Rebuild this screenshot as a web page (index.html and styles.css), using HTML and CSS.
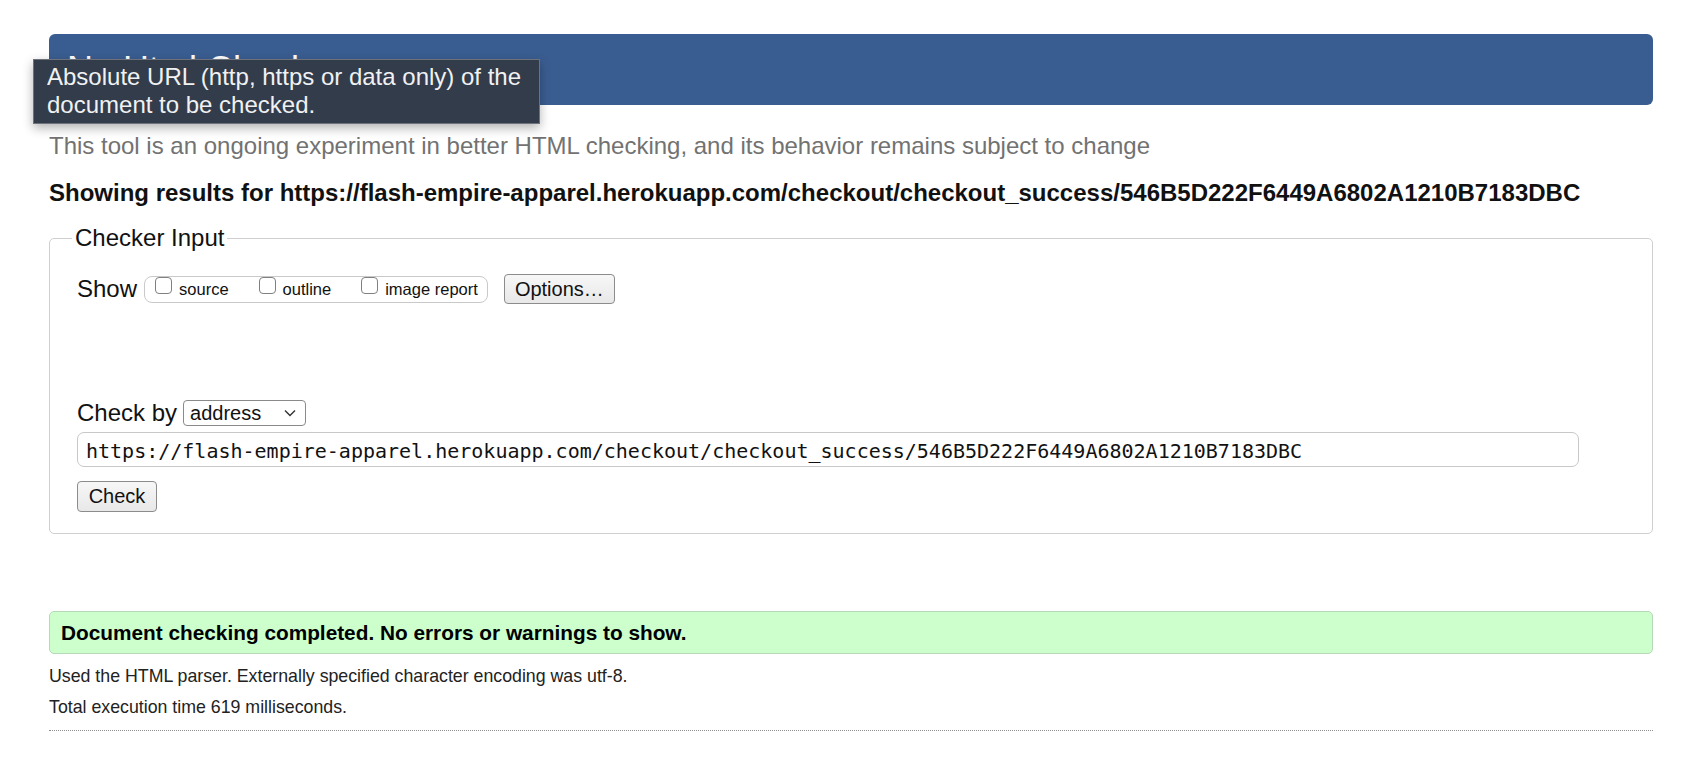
FILE: index.html
```html
<!DOCTYPE html>
<html lang="en">
<head>
<meta charset="utf-8">
<title>Showing results for https://flash-empire-apparel.herokuapp.com/checkout/checkout_success/546B5D222F6449A6802A1210B7183DBC - Nu Html Checker</title>
<link rel="stylesheet" href="styles.css">
</head>
<body>
<h1 class="site-title">Nu Html Checker</h1>
<p class="intro">This tool is an ongoing experiment in better HTML checking, and its behavior remains subject to change</p>
<p class="showing">Showing results for https://flash-empire-apparel.herokuapp.com/checkout/checkout_success/546B5D222F6449A6802A1210B7183DBC</p>
<form class="checker-form">
  <fieldset class="checker">
    <legend class="checker-legend">Checker Input</legend>
    <div class="show-row">
      <span class="row-label show-label">Show</span>
      <span class="show-options">
        <label class="opt"><input type="checkbox" class="cb">source</label>
        <label class="opt"><input type="checkbox" class="cb">outline</label>
        <label class="opt"><input type="checkbox" class="cb">image report</label>
      </span>
      <button type="button" class="btn options-btn">Options…</button>
    </div>
    <div class="checkby-row">
      <span class="row-label checkby-label">Check by</span>
      <select class="select"><option>address</option><option>file upload</option><option>text input</option></select>
    </div>
    <input class="url-input" type="url" value="https://flash-empire-apparel.herokuapp.com/checkout/checkout_success/546B5D222F6449A6802A1210B7183DBC">
    <button type="submit" class="btn check-btn">Check</button>
  </fieldset>
</form>
<p class="success">Document checking completed. No errors or warnings to show.</p>
<p class="meta">Used the HTML parser. Externally specified character encoding was utf-8.</p>
<p class="meta">Total execution time 619 milliseconds.</p>
<hr class="rule">
<div class="tooltip">Absolute URL (http, https or data only) of the document to be checked.</div>
</body>
</html>
```
FILE: styles.css
```css
html {
  background: #fff;
}

body {
  margin: 0;
  padding: 34px 39px 40px 49px;
  position: relative;
  font-family: "Liberation Sans", Arial, Helvetica, sans-serif;
  color: #111;
}

.site-title {
  margin: 0;
  height: 71px;
  box-sizing: border-box;
  padding-left: 18px;
  background: #3a5d91;
  border-radius: 6px;
  color: #fff;
  font-size: 36px;
  font-weight: normal;
  line-height: 72px;
  overflow: hidden;
}

.intro {
  margin: 27px 0 0;
  font-size: 24px;
  line-height: 28px;
  color: #727272;
}

.showing {
  margin: 19px 0 0;
  font-size: 24px;
  line-height: 28px;
  font-weight: bold;
  color: #111;
}

.checker-form {
  margin: 17px 0 0;
}

.checker {
  margin: 0;
  min-width: 0;
  padding: 22px 27px 21px;
  border: 1px solid #cfcfcf;
  border-radius: 5px;
}

.checker-legend {
  margin-left: -5px;
  padding: 0 3px;
  font-size: 24px;
  line-height: 28px;
}

.show-row {
  display: flex;
  align-items: center;
  height: 30px;
}

.row-label {
  font-size: 24px;
  line-height: 30px;
}

.show-label {
  margin-right: 7px;
}

.show-options {
  display: flex;
  align-items: center;
  height: 27px;
  box-sizing: border-box;
  padding: 0 9px 0 10px;
  border: 1px solid #c9c9c9;
  border-radius: 8px;
}

.opt {
  display: flex;
  align-items: center;
  margin-right: 30px;
  font-size: 16.5px;
  line-height: 20px;
}

.opt:last-child {
  margin-right: 0;
}

.cb {
  appearance: none;
  -webkit-appearance: none;
  box-sizing: border-box;
  width: 17px;
  height: 17px;
  margin: 0 7px 8px 0;
  border: 1px solid #808080;
  border-radius: 4px;
  background: #fff;
}

.btn {
  padding: 0;
  font-family: inherit;
  font-size: 20px;
  color: #111;
  background: linear-gradient(#f7f7f7, #e8e8e8);
  border: 1px solid #8c8c8c;
  border-radius: 4px;
}

.options-btn {
  margin-left: 16px;
  width: 111px;
  height: 30px;
}

.checkby-row {
  display: flex;
  align-items: center;
  height: 26px;
  margin-top: 96px;
}

.checkby-label {
  line-height: 26px;
  margin-right: 6px;
}

.select {
  appearance: none;
  -webkit-appearance: none;
  box-sizing: border-box;
  width: 123px;
  height: 26px;
  padding: 0 0 0 6px;
  font-family: inherit;
  font-size: 20px;
  color: #111;
  border: 1px solid #8a8a8a;
  border-radius: 4px;
  background: #fff url("data:image/svg+xml;utf8,<svg xmlns='http://www.w3.org/2000/svg' width='12' height='8' viewBox='0 0 12 8'><path d='M1 1.5 L6 6.5 L11 1.5' fill='none' stroke='%23333' stroke-width='1.4'/></svg>") no-repeat right 9px center;
}

.url-input {
  display: block;
  box-sizing: border-box;
  width: calc(100% - 46px);
  height: 35px;
  margin: 6px 0 0;
  padding: 2px 8px 0;
  font-family: "DejaVu Sans Mono", "Liberation Mono", monospace;
  font-size: 20px;
  color: #111;
  border: 1px solid #c8c8c8;
  border-radius: 7px;
  background: #fff;
}

.check-btn {
  display: block;
  margin-top: 14px;
  width: 80px;
  height: 31px;
}

.success {
  margin: 77px 0 0;
  height: 43px;
  box-sizing: border-box;
  padding: 0 11px;
  font-size: 20.8px;
  font-weight: bold;
  line-height: 41px;
  color: #000;
  background: #ccffcc;
  border: 1px solid #b7d9b7;
  border-radius: 5px;
}

.meta {
  margin: 0;
  font-size: 17.75px;
  line-height: 31px;
  color: #222;
}

.success + .meta {
  margin-top: 7px;
}

.rule {
  height: 0;
  margin: 7px 0 0;
  border: 0;
  border-top: 1px dotted #8d8d8d;
}

.tooltip {
  position: absolute;
  left: 33px;
  top: 59px;
  width: 507px;
  height: 65px;
  box-sizing: border-box;
  padding: 3px 8px 0 13px;
  font-size: 24px;
  line-height: 28px;
  color: #f0f1f3;
  background: #333c4a;
  border: 1px solid #6e737b;
  box-shadow: 0 4px 10px rgba(0, 0, 0, 0.3);
}
```
